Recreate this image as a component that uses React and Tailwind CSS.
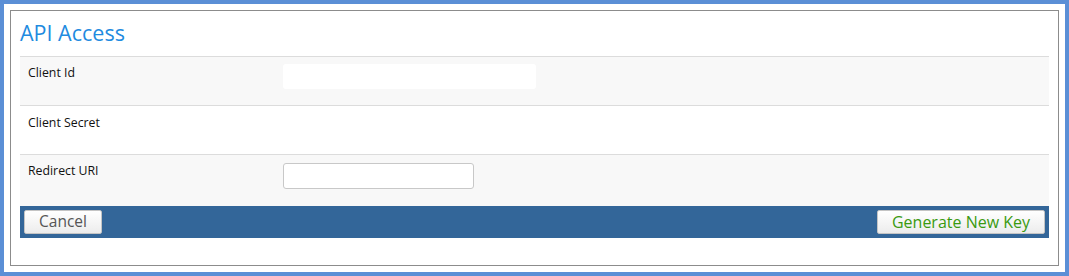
export default function App() {
    return (
        <div className="w-[1069px] h-[276px] border-4 border-[#5b8fd6] bg-white p-[6px] font-['Open_Sans',sans-serif]">
            <div className="h-[256px] border border-[#8c8c8c] px-[9px]">
                <h1 className="h-[45px] pt-[9px] text-[21.5px] leading-[26px] text-[#1f8be0]">API Access</h1>
                <div className="border-t border-[#dcdcdc]">
                    <div className="flex h-[49px] bg-[#f8f8f8] border-b border-[#dcdcdc]">
                        <div className="w-[263px] pl-[8px] pt-[7px] text-[12.3px] text-[#111]">Client Id</div>
                        <div className="pt-[7px]">
                            <div className="w-[253px] h-[25px] rounded-[3px] bg-white" />
                        </div>
                    </div>
                    <div className="flex h-[49px] bg-white border-b border-[#dcdcdc]">
                        <div className="w-[263px] pl-[8px] pt-[8px] text-[12.3px] text-[#111]">Client Secret</div>
                    </div>
                    <div className="flex h-[51px] bg-[#f8f8f8]">
                        <div className="w-[263px] pl-[8px] pt-[7px] text-[12.3px] text-[#111]">Redirect URI</div>
                        <div className="pt-[7px]">
                            <input className="w-[191px] h-[26px] rounded-[3px] border border-[#c8c8c8] bg-white px-2 text-[12px] outline-none" />
                        </div>
                    </div>
                    <div className="flex h-[32px] items-center justify-between bg-[#336699] px-[4px]">
                        <button className="h-[24px] w-[78px] rounded-[2px] border border-[#c4c4c4] bg-gradient-to-b from-white to-[#ececec] text-[15.5px] leading-none text-[#555]">Cancel</button>
                        <button className="h-[24px] w-[168px] rounded-[2px] border border-[#c4c4c4] bg-gradient-to-b from-white to-[#ececec] text-[16px] leading-none text-[#3a9a10]">Generate New Key</button>
                    </div>
                </div>
            </div>
        </div>
    )
}
